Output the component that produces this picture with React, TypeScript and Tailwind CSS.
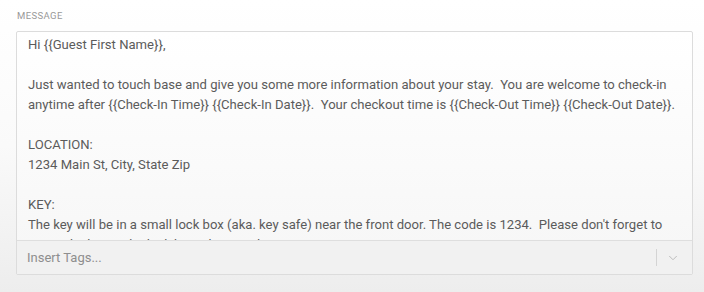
import { ChevronDown } from "lucide-react";

const lines = [
  "Hi {{Guest First Name}},",
  "",
  "Just wanted to touch base and give you some more information about your stay.\u00a0 You are welcome to check-in",
  "anytime after {{Check-In Time}} {{Check-In Date}}.\u00a0 Your checkout time is {{Check-Out Time}} {{Check-Out Date}}.",
  "",
  "LOCATION:",
  "1234 Main St, City, State Zip",
  "",
  "KEY:",
  "The key will be in a small lock box (aka. key safe) near the front door. The code is 1234.\u00a0 Please don't forget to",
  "return the key to the lock box when you leave.",
];

export default function App() {
  return (
    <div
      className="w-[704px] h-[292px] bg-gradient-to-b from-white via-[#fafafa] to-[#ededed] px-4 pt-[11px]"
      style={{ fontFamily: "Roboto, 'Liberation Sans', sans-serif" }}
    >
      {/* Label */}
      <div className="text-[9.5px] leading-[10px] tracking-[0.4px] text-[#999999] uppercase pl-[1px]">
        Message
      </div>

      {/* Message box */}
      <div className="mt-[10px] w-[677px] border border-[#dcdcdc] rounded-[2px] bg-gradient-to-b from-white to-[#f6f6f6]">
        <div className="h-[208px] overflow-hidden pl-[11px] pr-3 pt-[3px] text-[13.1px] leading-[20px] text-[#5b5b5b]">
          {lines.map((l, i) => (
            <div key={i} className="whitespace-pre h-[20px]">
              {l}
            </div>
          ))}
        </div>

        {/* Insert tags */}
        <div className="h-[34px] border-t border-[#dedede] bg-[#f1f1f1] flex items-center pl-[10px] pr-[12px]">
          <span className="flex-1 text-[13px] text-[#8e8e8e]">Insert Tags...</span>
          <span className="w-px h-[17px] bg-[#d4d4d4] mr-[9px]" />
          <ChevronDown className="w-[14px] h-[14px] text-[#b8b8b8]" strokeWidth={1.6} />
        </div>
      </div>
    </div>
  );
}
